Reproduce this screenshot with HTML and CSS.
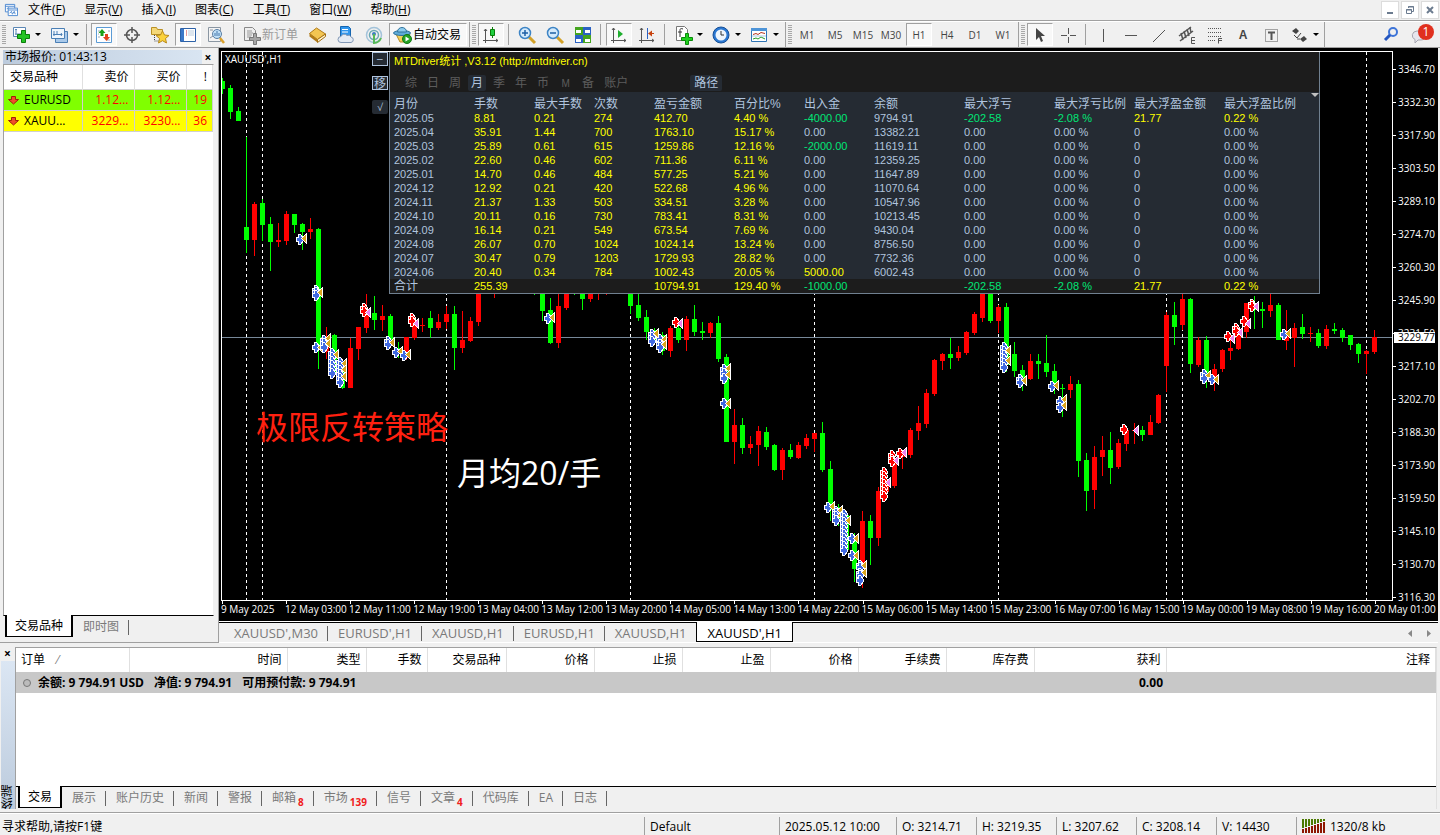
FILE: index.html
```
<!DOCTYPE html>
<html lang="zh-CN">
<head>
    <meta charset="UTF-8">
    <meta name="viewport" content="width=device-width, initial-scale=1.0">
    <title>XAUUSD',H1</title>
    <link rel="stylesheet" href="styles.css">
</head>
<body>
    <nav class="menubar">
        <svg class="app-icon" width="14" height="14" viewBox="0 0 15 15" fill="#fff" stroke="#4a86d0"><path d="M1.500 1.500h10v8h-10z"/><path d="M1.500 3.500h10M3 6l2-1 1 2 2-1" /><path d="M4.500 5.500h10v8h-10z"/><path d="M4.500 7.500h10M6 11l2-2 1 3 2-3 1 3" fill="none"/></svg>
        <button>文件(<u>F</u>)</button>
        <button>显示(<u>V</u>)</button>
        <button>插入(<u>I</u>)</button>
        <button>图表(<u>C</u>)</button>
        <button>工具(<u>T</u>)</button>
        <button>窗口(<u>W</u>)</button>
        <button>帮助(<u>H</u>)</button>
        <div class="window-buttons">
            <button aria-label="Minimize"><svg width="10" height="10" stroke="#6b7b8f" stroke-width="2"><path d="M2 8h6"/></svg></button>
            <button aria-label="Restore"><svg width="10" height="10" fill="none" stroke="#6b7b8f"><path d="M3.500 3V1.500h5v5H7M3 2h6M1.500 4.500h5v4h-5zM1 5h6"/></svg></button>
            <button aria-label="Close"><svg width="10" height="10" stroke="#6b7b8f" stroke-width="2"><path d="M2 2l6 6M8 2L2 8"/></svg></button>
        </div>
    </nav>

    <div class="toolbar">
        <div class="tool-group">
            <span class="grip"></span>
            <button class="tool drop" aria-label="New chart"><svg width="20" height="20" viewBox="0 0 20 20"><path d="M2.500 2.500h12v9h-12z" fill="#fff" stroke="#5b87b5"/><path d="M5 4v6M4 5l1-1 1 1M4 9h8" stroke="#5b87b5" fill="none"/><path d="M10.500 5.500h4v4h4v4h-4v4h-4v-4h-4v-4h4z" fill="#23c423" stroke="#0a7d0a"/></svg></button>
            <button class="tool drop" aria-label="Profiles"><svg width="20" height="20" viewBox="0 0 20 20" stroke="#4a7fb5"><path d="M6.500 6.500h12v11h-12z" fill="#a9c9ea"/><path d="M2.500 3.500h13v10h-13z" fill="#eef5fc"/><path d="M5 6v5M4 9.500h9M8 6v4M12 8l1 1.500-1 1.500" fill="none"/></svg></button>
            <span class="sep"></span>
            <button class="tool pressed" aria-label="Market watch"><svg width="20" height="20" viewBox="0 0 20 20"><path d="M2.500 2.500h15v15h-15z" fill="#fff" stroke="#5b9bd5"/><path d="M4 6h2M4 9h1M4 12h2M14 6h2M13 15h3" stroke="#9ab"/><path d="M8 4l3.500 4h-2v3h-3V8h-2z" fill="#18a018"/><path d="M12.500 16l3.500-4h-2V9h-3v3H9z" fill="#e0431c"/></svg></button>
            <button class="tool" aria-label="Data window"><svg width="20" height="20" viewBox="0 0 20 20" fill="none" stroke="#555" stroke-width="1.500"><circle cx="10" cy="10" r="5.500"/><path d="M10 2v6M10 12v6M2 10h6M12 10h6"/></svg></button>
            <button class="tool" aria-label="Navigator"><svg width="20" height="20" viewBox="0 0 20 20"><path d="M1.500 2.500h5l1 2h5v5h-11z" fill="#f5d878" stroke="#b99025"/><path d="M4.500 10v6h5" fill="none" stroke="#444" stroke-dasharray="1 1"/><path d="M12.500 6l2 4 4.500.5-3.500 3 1 4.500-4-2.300-4 2.300 1-4.500-3.500-3 4.500-.5z" fill="#fbd23c" stroke="#b98a1c"/></svg></button>
            <button class="tool pressed" aria-label="Terminal"><svg width="20" height="20" viewBox="0 0 20 20"><path d="M2.500 3.500h15v13h-15z" fill="#fff" stroke="#2d62a8"/><path d="M3 4h3v12H3z" fill="#3c78c8"/><path d="M8 6h1M8 8h1M8 10h1" stroke="#c33"/><path d="M10 6h6M10 8h6M10 10h6" stroke="#bcd"/></svg></button>
            <button class="tool" aria-label="Strategy tester"><svg width="20" height="20" viewBox="0 0 20 20"><path d="M2.500 2.500h12v14h-12z" fill="#f4f4f4" stroke="#8a96a2"/><path d="M4 5h3M4 13l3-2" stroke="#8a96a2"/><circle cx="11" cy="9" r="4.500" fill="#bfe0f8" stroke="#5a7fa5"/><path d="M9 11V8M11 11V6M13 11V8" stroke="#47a"/><path d="M14 13l4 5" stroke="#d9a02c" stroke-width="2.500"/></svg></button>
            <span class="sep"></span>
            <button class="tool wide" disabled><svg width="20" height="20" viewBox="0 0 20 20"><path d="M2.500 2.500h8l3 3v10h-11z" fill="#eee" stroke="#888"/><path d="M5 6h5M5 8h6M5 10h5M5 12h4" stroke="#999"/><path d="M11.500 8.500h3v4h4v3h-4v4h-3v-4h-4v-3h4z" fill="#a5a5a5" stroke="#777"/></svg><span>新订单</span></button>
            <button class="tool" aria-label="MetaEditor"><svg width="20" height="20" viewBox="0 0 20 20"><path d="M8.500 3l9 6-8 5.500-8-6z" fill="#f3c552" stroke="#b07a18"/><path d="M1.500 8.500v3l8 6v-3z" fill="#b07a18"/><path d="M9.500 14.500l8-5.500v2.500l-8 6z" fill="#fff3cf" stroke="#a56f10"/></svg></button>
            <button class="tool" aria-label="VPS"><svg width="20" height="20" viewBox="0 0 20 20"><path d="M4.500 1.500h8l2 2v8h-10z" fill="#2f96ee" stroke="#1565b0"/><path d="M6 4.500h6M6 7h6" stroke="#fff"/><path d="M5 17.500a3 3 0 0 1 0-6 3.500 3.500 0 0 1 6-1 3 3 0 0 1 4 1.500 2.800 2.800 0 0 1 0 5.500z" fill="#e4ebf4" stroke="#8197b5"/></svg></button>
            <button class="tool" aria-label="Signals"><svg width="20" height="20" viewBox="0 0 20 20" fill="none"><circle cx="10" cy="10" r="7.500" stroke="#a3c3da" stroke-width="1.500"/><circle cx="10" cy="10" r="4.500" stroke="#6ba8b5" stroke-width="1.500"/><circle cx="10" cy="9" r="2" fill="#3f7fc0"/><path d="M10 9v9a8 8 0 0 0 7-5" stroke="#57b957" stroke-width="2"/></svg></button>
            <button class="tool wide pressed"><svg width="20" height="20" viewBox="1 0 20 20"><path d="M4 9h14l-4 8H8z" fill="#f4cf5b" stroke="#b58b20"/><ellipse cx="10" cy="8" rx="8.500" ry="2.500" fill="#5fabd8" stroke="#2f739c"/><path d="M5.500 7c0-6 9-6 9 0z" fill="#8ccbed" stroke="#2f739c"/><circle cx="15" cy="14" r="4.500" fill="#27a327" stroke="#117a11"/><path d="M13.500 11.500l4 2.500-4 2.500z" fill="#fff"/></svg><span>自动交易</span></button>
        </div>
        <div class="tool-group charts">
            <span class="grip"></span>
            <button class="tool pressed" aria-label="Candlesticks"><svg width="20" height="20" viewBox="0 0 20 20"><path d="M4.500 4v14M2 15.500h15M3 6l1.500-2L6 6M15 14l2 1.500-2 1.500" fill="none" stroke="#555"/><path d="M11.500 2v11" stroke="#0a7d0a"/><path d="M9.500 4.500h4v6h-4z" fill="#1fcf3f" stroke="#0a7d0a"/></svg></button>
            <span class="sep"></span>
            <button class="tool" aria-label="Zoom in"><svg width="20" height="20" viewBox="0 0 20 20"><path d="M12 12l6 6" stroke="#d3a127" stroke-width="3"/><circle cx="8" cy="8" r="5.500" fill="#d4eafb" stroke="#3d84c5" stroke-width="1.500"/><path d="M5 8h6M8 5v6" stroke="#1d5fa5" stroke-width="1.500"/></svg></button>
            <button class="tool" aria-label="Zoom out"><svg width="20" height="20" viewBox="0 0 20 20"><path d="M12 12l6 6" stroke="#d3a127" stroke-width="3"/><circle cx="8" cy="8" r="5.500" fill="#d4eafb" stroke="#3d84c5" stroke-width="1.500"/><path d="M5 8h6" stroke="#1d5fa5" stroke-width="1.500"/></svg></button>
            <button class="tool" aria-label="Tile windows"><svg width="20" height="20" viewBox="0 0 20 20"><path d="M2 2h8v8H2zM10 10h8v8h-8z" fill="#45a51f"/><path d="M10 2h8v8h-8zM2 10h8v8H2z" fill="#2b62c4"/><path d="M3 5h5v3H3zM12 5h5v3h-5zM3 14h5v3H3zM12 14h5v3h-5z" fill="#fff"/></svg></button>
            <span class="sep"></span>
            <button class="tool pressed" aria-label="Auto scroll"><svg width="20" height="20" viewBox="0 0 20 20"><path d="M4.500 3v15M2 15.500h15M3 5l1.500-2L6 5M15 14l2 1.500-2 1.500" fill="none" stroke="#555"/><path d="M9 5l5 4-5 4z" fill="#1fae2f"/></svg></button>
            <button class="tool" aria-label="Chart shift"><svg width="20" height="20" viewBox="0 0 20 20"><path d="M4.500 3v15M2 15.500h15M3 5l1.500-2L6 5M15 14l2 1.500-2 1.500" fill="none" stroke="#555"/><path d="M10.500 3v11" stroke="#2b62c4"/><path d="M17 8.500h-4" stroke="#c8430f"/><path d="M11 8.500l4-3v6z" fill="#c8430f"/></svg></button>
            <span class="sep"></span>
            <button class="tool drop" aria-label="Indicators"><svg width="20" height="20" viewBox="0 0 20 20"><path d="M3.500 1.500h8l3 3v11h-11z" fill="#fff" stroke="#777"/><path d="M10 4c-3-1-3 0-3 2v6M5 7h4" fill="none" stroke="#333"/><path d="M12.500 8.500h3v4h4v3h-4v4h-3v-4h-4v-3h4z" fill="#1fd01f" stroke="#0a8a0a"/></svg></button>
            <button class="tool drop" aria-label="Periods"><svg width="20" height="20" viewBox="0 0 20 20"><circle cx="10" cy="10" r="8" fill="#2b78d2" stroke="#174f96"/><circle cx="10" cy="10" r="5.500" fill="#eef5fc"/><path d="M10 6v4h3" fill="none" stroke="#333"/></svg></button>
            <button class="tool drop" aria-label="Templates"><svg width="20" height="20" viewBox="0 0 20 20"><path d="M2.500 3.500h15v13h-15z" fill="#fff" stroke="#2f74b5"/><path d="M2 3h16v3H2z" fill="#4d94d8"/><path d="M4 9.500l3-1 2 1 3-2 4 1" fill="none" stroke="#b8321c"/><path d="M4 14l3-1 2 1 3-2 4 2" fill="none" stroke="#269a26"/><path d="M3 11h14" stroke="#adc7e0"/></svg></button>
        </div>
        <div class="tool-group periods">
            <span class="grip"></span>
            <button class="tool">M1</button>
            <button class="tool">M5</button>
            <button class="tool">M15</button>
            <button class="tool">M30</button>
            <button class="tool pressed">H1</button>
            <button class="tool">H4</button>
            <button class="tool">D1</button>
            <button class="tool">W1</button>
        </div>
        <div class="tool-group">
            <span class="grip"></span>
            <button class="tool pressed" aria-label="Cursor"><svg width="20" height="20" viewBox="0 0 20 20"><path d="M6 3v12l3-3 2 5 2-1-2-5h4z" fill="#444"/></svg></button>
            <button class="tool" aria-label="Crosshair"><svg width="20" height="20" viewBox="0 0 20 20"><path d="M10.500 3v6M10.500 12v6M3 10.500h6M12 10.500h6" stroke="#555"/></svg></button>
            <span class="sep"></span>
            <button class="tool" aria-label="Vertical line"><svg width="20" height="20" viewBox="0 0 20 20"><path d="M10.500 4v13" stroke="#555"/></svg></button>
            <button class="tool" aria-label="Horizontal line"><svg width="20" height="20" viewBox="0 0 20 20"><path d="M4 10.500h12" stroke="#555"/></svg></button>
            <button class="tool" aria-label="Trendline"><svg width="20" height="20" viewBox="0 0 20 20"><path d="M4 17L16 5" stroke="#555"/></svg></button>
            <button class="tool" aria-label="Equidistant channel"><svg width="20" height="20" viewBox="0 0 20 20" fill="none" stroke="#555"><path d="M2 11L14 2M3 16L16 6M4 8l2 7M7 6l2 7M10 4l2 7M13 2l1 6" stroke-width="1.500"/><path d="M18 12.500h-3.500v6H18M14.500 15.500H18"/></svg></button>
            <button class="tool" aria-label="Fibonacci"><svg width="20" height="20" viewBox="0 0 20 20" fill="none" stroke="#555"><path d="M3 3.500h14M3 7.500h14M3 11.500h14M3 15.500h8" stroke-dasharray="1 1"/><path d="M17 13.500h-3.500v5M13.500 15.500H17"/></svg></button>
            <button class="tool letter" aria-label="Text">A</button>
            <button class="tool" aria-label="Text label"><svg width="20" height="20" viewBox="0 0 20 20" fill="none" stroke="#555"><path d="M4.500 4.500h12v12h-12z" stroke-dasharray="1 1"/><path d="M7 7.500h7M10.500 7v8" stroke-width="2"/></svg></button>
            <button class="tool drop" aria-label="Arrows"><svg width="20" height="20" viewBox="0 0 20 20" fill="#444"><path d="M3 6l4-3 3 3-3 3zM11 14l4-3 3 3-4 3z"/><path d="M5 10l3 3 4-5M8 14h3" fill="none" stroke="#444"/></svg></button>
        </div>
        <div class="tool-end">
            <button class="tool" aria-label="Search"><svg width="18" height="18" viewBox="0 0 18 18" fill="none"><circle cx="11" cy="6" r="4" stroke="#3d74d8" stroke-width="2"/><path d="M8 9l-5 5" stroke="#2456c0" stroke-width="3"/></svg></button>
            <button class="tool chat" aria-label="Notifications"><svg width="24" height="18" viewBox="0 0 24 18"><path d="M8 5h4a5 4.500 0 0 1 0 9H9l-3 3v-3.500A5 4.500 0 0 1 8 5z" fill="#e6e6ee" stroke="#a6a6b0"/></svg><span class="badge">1</span></button>
        </div>
    </div>

    <main class="workspace">
        <section class="market">
            <div class="panel-title"><span>市场报价: 01:43:13</span><button aria-label="Close">×</button></div>
            <div class="market-body">
                <table class="quotes">
                    <thead><tr><th>交易品种</th><th>卖价</th><th>买价</th><th>!</th></tr></thead>
                    <tbody>
                        <tr class="lime"><td><svg width="11" height="10" viewBox="0 0 11 10"><path d="M3.500 1.500h4v3h3l-5 4.500-5-4.500h3z" fill="#f0502a" stroke="#a02008"/></svg>EURUSD</td><td>1.12...</td><td>1.12...</td><td>19</td></tr>
                        <tr class="yellow"><td><svg width="11" height="10" viewBox="0 0 11 10"><path d="M3.500 1.500h4v3h3l-5 4.500-5-4.500h3z" fill="#f0502a" stroke="#a02008"/></svg>XAUU...</td><td>3229...</td><td>3230...</td><td>36</td></tr>
                    </tbody>
                </table>
            </div>
            <div class="tabs">
                <button class="tab active">交易品种</button>
                <button class="tab">即时图</button>
            </div>
        </section>

        <section class="chart-area">
            <div class="chart">
                <div class="plot">
                    <svg id="plot-svg" viewBox="222 52 1170 548" preserveAspectRatio="none" shape-rendering="crispEdges"></svg>
                    <span class="symbol">XAUUSD',H1</span>
                    <span class="note note-red">极限反转策略</span>
                    <span class="note note-white">月均20/手</span>
                    <div class="stats-side">
                        <button>−</button>
                        <button>移</button>
                        <button class="flat">√</button>
                    </div>
                    <div class="stats">
                        <div class="stats-head">
                            <div class="stats-title">MTDriver统计 ,V3.12 (http://mtdriver.cn)</div>
                            <div class="stats-tabs">
                                <button>综</button><button>日</button><button>周</button><button class="on">月</button><button>季</button><button>年</button><button>币</button><button class="small">M</button><button>备</button><button>账户</button><button class="on path">路径</button>
                            </div>
                        </div>
                        <table class="stats-table">
                            <thead>
                                <tr><th>月份</th><th>手数</th><th>最大手数</th><th>次数</th><th>盈亏金额</th><th>百分比%</th><th>出入金</th><th>余额</th><th>最大浮亏</th><th>最大浮亏比例</th><th>最大浮盈金额</th><th>最大浮盈比例</th></tr>
                            </thead>
                            <tbody id="stats-rows"></tbody>
                            <tfoot>
                                <tr><td>合计</td><td class="y">255.39</td><td></td><td></td><td class="y">10794.91</td><td class="y">129.40 %</td><td class="g">-1000.00</td><td></td><td class="g">-202.58</td><td class="g">-2.08 %</td><td class="y">21.77</td><td class="y">0.22 %</td></tr>
                            </tfoot>
                        </table>
                        <span class="stats-caret"></span>
                    </div>
                </div>
                <div class="prices" id="prices"></div>
                <div class="times" id="times"></div>
            </div>
            <div class="chart-tabs">
                <button class="tab">XAUUSD',M30</button>
                <button class="tab">EURUSD',H1</button>
                <button class="tab">XAUUSD,H1</button>
                <button class="tab">EURUSD,H1</button>
                <button class="tab last">XAUUSD,H1</button>
                <button class="tab active">XAUUSD',H1</button>
                <span class="scrollers"><button aria-label="Previous"><svg width="4" height="7"><path d="M4 0v7L0 3.500z" fill="#888"/></svg></button><button aria-label="Next"><svg width="4" height="7"><path d="M0 0v7l4-3.500z" fill="#888"/></svg></button></span>
            </div>
        </section>
    </main>

    <section class="terminal">
        <div class="terminal-side">
            <button aria-label="Close">×</button>
            <div class="terminal-name">终端</div>
        </div>
        <div class="terminal-body">
            <table class="orders">
                <colgroup><col class="w-order"><col class="w-time"><col class="w-type"><col class="w-lots"><col class="w-type"><col class="w-price"><col class="w-price"><col class="w-price"><col class="w-price"><col class="w-price"><col class="w-price"><col class="w-profit"><col></colgroup>
                <thead><tr><th>订单<i>⁄</i></th><th>时间</th><th>类型</th><th>手数</th><th>交易品种</th><th>价格</th><th>止损</th><th>止盈</th><th>价格</th><th>手续费</th><th>库存费</th><th>获利</th><th>注释</th></tr></thead>
                <tbody><tr><td colspan="11"><span class="dot"></span><span class="sum">余额: 9 794.91 USD</span><span class="sum">净值: 9 794.91</span><span class="sum">可用预付款: 9 794.91</span></td><td>0.00</td><td></td></tr></tbody>
            </table>
            <div class="tabs terminal-tabs">
                <button class="tab active">交易</button>
                <button class="tab">展示</button>
                <button class="tab">账户历史</button>
                <button class="tab">新闻</button>
                <button class="tab">警报</button>
                <button class="tab">邮箱<b>8</b></button>
                <button class="tab">市场<b>139</b></button>
                <button class="tab">信号</button>
                <button class="tab">文章<b>4</b></button>
                <button class="tab">代码库</button>
                <button class="tab">EA</button>
                <button class="tab">日志</button>
            </div>
        </div>
    </section>

    <footer class="statusbar">
        <span class="help">寻求帮助,请按F1键</span>
        <span class="s-profile">Default</span>
        <span class="s-date">2025.05.12 10:00</span>
        <span class="s-value">O: 3214.71</span>
        <span class="s-value">H: 3219.35</span>
        <span class="s-value">L: 3207.62</span>
        <span class="s-value">C: 3208.14</span>
        <span class="s-value">V: 14430</span>
        <span class="s-net"><svg width="24" height="14" viewBox="0 0 24 14" shape-rendering="crispEdges"><path d="M1 0v9M4 0v8M7 0v7M10 0v6M13 0v5M16 0v4M19 0v3M22 0v2" stroke="#4c7a00" stroke-width="2"/><path d="M1 10v4M4 9v5M7 8v6M10 7v7M13 6v8M16 5v9M19 4v10M22 3v11" stroke="#8e1600" stroke-width="2"/></svg>1320/8 kb</span>
    </footer>

    <script src="chart.js"></script>
</body>
</html>
```
FILE: styles.css
```
* {
    box-sizing: border-box;
}

body {
    margin: 0;
    height: 100vh;
    display: flex;
    flex-direction: column;
    overflow: hidden;
    background: #f0f0f0;
    color: #000;
    font: 12px/16px "Open Sans", "Noto Sans CJK SC", sans-serif;
}

button {
    margin: 0;
    padding: 0;
    border: 0;
    background: none;
    color: inherit;
    font: inherit;
}

table {
    border-collapse: collapse;
    table-layout: fixed;
    width: 100%;
}

th {
    font-weight: normal;
}

/* Menu */
.menubar {
    display: flex;
    align-items: center;
    height: 21px;
    flex: none;
    padding-left: 4px;
    border-bottom: 1px solid #a0a0a0;
}

.menubar > button {
    padding: 0 9px 0 10px;
}

.window-buttons {
    display: flex;
    gap: 2px;
    margin-left: auto;
    padding-right: 1px;
}

.window-buttons button {
    display: flex;
    align-items: center;
    justify-content: center;
    width: 18px;
    height: 18px;
    background: #fff;
    border: 1px solid #dcdcdc;
}

/* Toolbar */
.toolbar {
    display: flex;
    flex: none;
    height: 27px;
    border-top: 1px solid #fff;
    border-bottom: 1px solid #a0a0a0;
}

.tool-group {
    display: flex;
    align-items: center;
    gap: 2px;
    padding: 0 2px;
    border-right: 1px solid #a0a0a0;
}

.grip {
    width: 4px;
    height: 20px;
    background: repeating-linear-gradient(#a8a8a8 0 1px, #f0f0f0 1px 2px);
}

.sep {
    width: 1px;
    height: 21px;
    margin: 0 2px;
    background: #a0a0a0;
}

.charts {
    padding-right: 3px;
}

.charts .sep {
    margin-right: 3px;
}

.tool {
    display: flex;
    align-items: center;
    justify-content: center;
    width: 26px;
    height: 23px;
    color: #444;
}

.tool.drop {
    width: 36px;
    justify-content: flex-start;
    padding-left: 3px;
}

.tool.drop::after {
    content: "";
    margin-left: 4px;
    border: 3px solid transparent;
    border-top-color: #000;
    border-bottom: 0;
}

.tool.wide {
    width: auto;
    padding: 0 5px 0 3px;
    color: #000;
}

.tool.wide:disabled {
    color: #9a9a9a;
    padding: 0 5px 0 4px;
}

.tool.pressed {
    background: #f8f8f8;
    border: 1px solid #fff;
    border-top-color: #a0a0a0;
    border-left-color: #a0a0a0;
}

.periods .tool {
    font-size: 10px;
}

.letter {
    font: bold 12px "Liberation Sans", sans-serif;
}

.tool-end {
    display: flex;
    align-items: center;
    gap: 4px;
    margin-left: auto;
    padding-right: 6px;
}

.chat {
    position: relative;
}

.badge {
    position: absolute;
    right: 0;
    top: 1px;
    width: 16px;
    height: 16px;
    border-radius: 8px;
    background: #e0301e;
    color: #fff;
}

/* Workspace */
.workspace {
    display: flex;
    flex: 1;
    min-height: 0;
}

.market {
    display: flex;
    flex-direction: column;
    width: 219px;
    padding: 2px 4px 4px 3px;
    border-right: 1px solid #a0a0a0;
    border-bottom: 1px solid #a0a0a0;
}

.panel-title {
    display: flex;
    height: 14px;
    line-height: 13px;
}

.panel-title span {
    flex: 1;
    padding-left: 2px;
    background: linear-gradient(90deg, #bccbdd, #d9e5f2);
}

.panel-title button {
    width: 12px;
    font-weight: bold;
}

.market-body {
    flex: 1;
    background: #fff;
    border: 1px solid #a0a0a0;
    border-bottom-color: #000;
    border-right-color: #f0f0f0;
}

.quotes th {
    height: 24px;
    border-right: 1px solid #e0e0e0;
}

.quotes th,
.quotes td {
    width: 52px;
    padding: 0 5px 0 0;
    text-align: right;
}

.quotes th:first-child {
    width: 78px;
    padding-left: 6px;
    text-align: left;
}

.quotes th:last-child {
    width: auto;
}

.quotes td {
    height: 21px;
    border: 1px solid #d0d0d0;
    border-left: 0;
    color: #f00;
}

.quotes td:first-child {
    padding-left: 4px;
    text-align: left;
    color: #000;
}

.quotes td svg {
    margin-right: 5px;
    vertical-align: -1px;
}

.lime {
    background: #80ff00;
}

.yellow {
    background: #ff0;
}

.tabs {
    display: flex;
    align-items: flex-start;
    padding-left: 2px;
}

.tab {
    position: relative;
    height: 22px;
    padding: 0 10px;
    color: #7a7a7a;
}

.tab::after {
    content: "";
    position: absolute;
    right: 0;
    top: 4px;
    width: 1px;
    height: 15px;
    background: #666;
}

.tab.active {
    height: 22px;
    margin-top: -1px;
    padding: 1px 8px 0;
    background: #fff;
    border: 1px solid #000;
    border-width: 0 2px 1px 2px;
    color: #000;
}

.tab.active::after,
.tab.last::after {
    display: none;
}

/* Chart */
.chart-area {
    display: flex;
    flex-direction: column;
    flex: 1;
    min-width: 0;
    padding-right: 2px;
}

.chart {
    display: grid;
    grid-template: 1fr 20px / 1fr 45px;
    flex: 1;
    min-height: 0;
    padding: 3px 0 0 2px;
    background: #000;
    color: #fff;
    font-size: 10px;
}

.plot {
    position: relative;
    border: 1px solid #fff;
}

#plot-svg {
    position: absolute;
    width: 100%;
    height: 100%;
}

.symbol {
    position: absolute;
    left: 3px;
    top: 0;
    line-height: 14px;
}

.note {
    position: absolute;
    font-size: 32px;
    line-height: 40px;
}

.note-red {
    left: 34px;
    top: 355px;
    color: #ff2010;
}

.note-white {
    left: 235px;
    top: 401px;
}

.prices {
    display: flex;
    flex-direction: column;
    justify-content: space-between;
    position: relative;
    margin-bottom: -1px;
    padding-top: 13px;
}

.prices span {
    padding-left: 5px;
    line-height: 10px;
    background: linear-gradient(#fff, #fff) 0 5px / 3px 1px no-repeat;
}

.prices .current {
    position: absolute;
    left: 1px;
    top: 281px;
    width: 41px;
    padding-left: 4px;
    line-height: 11px;
    background: #fff;
    color: #000;
}

.times {
    display: grid;
    grid-template-columns: repeat(19, 1fr);
    grid-column: span 2;
    line-height: 17px;
    white-space: nowrap;
}

.times span {
    background: linear-gradient(#fff, #fff) 1px 0 / 1px 3px no-repeat;
}

.chart-tabs {
    display: flex;
    height: 22px;
    border-top: 1px solid #fff;
    border-bottom: 1px solid #fff;
    padding-left: 5px;
    box-shadow: inset 0 1px #000;
    font-size: 13px;
}

.chart-tabs .tab {
    height: 20px;
    padding: 2px 10px 0;
}

.chart-tabs .tab.active {
    border-width: 0 1px 1px 1px;
    margin-top: 0;
}

.scrollers {
    display: flex;
    gap: 15px;
    margin-left: auto;
    padding-right: 7px;
}

/* Statistics overlay */
.stats-side {
    position: absolute;
    left: 150px;
    top: 0;
    display: flex;
    flex-direction: column;
    gap: 10px;
}

.stats-side button {
    width: 16px;
    height: 14px;
    border: 1px solid #b0c4de;
    background: #252b33;
    color: #b0c4de;
    font-size: 12px;
    line-height: 11px;
}

.stats-side .flat {
    border: 0;
    border-radius: 2px;
    font-size: 10px;
}

.stats {
    position: absolute;
    left: 167px;
    top: 0;
    width: 931px;
    border: 1px solid #708090;
    border-top: 0;
    background: #252b33;
    color: #b0c4de;
    font: 11px/14px "Liberation Sans", "Noto Sans CJK SC", sans-serif;
}

.stats-head {
    height: 40px;
    padding: 2px 4px;
    background: #1c1c1c;
}

.stats-title {
    color: #ff0;
}

.stats-tabs {
    display: flex;
    gap: 4px;
    margin-top: 7px;
    padding-left: 8px;
    font-size: 12px;
    color: #5c5c5c;
}

.stats-tabs button {
    height: 16px;
    padding: 0 3px;
    line-height: 17px;
}

.stats-tabs .small {
    width: 19px;
    font-size: 10px;
}

.stats-tabs .on {
    border-radius: 2px;
    background: #252b33;
    color: #b0c4de;
}

.stats-tabs .path {
    margin-left: 55px;
    padding: 0 4px;
}

.stats-table th,
.stats-table td {
    width: 90px;
    height: 14px;
    padding: 0 0 0 4px;
    text-align: left;
    white-space: nowrap;
}

.stats-table th {
    height: 19px;
    padding-top: 6px;
    font-size: 12px;
    line-height: 13px;
}

.stats-table th:nth-child(1),
.stats-table th:nth-child(5),
.stats-table th:nth-child(10) {
    width: 80px;
}

.stats-table th:nth-child(2),
.stats-table th:nth-child(3),
.stats-table th:nth-child(4) {
    width: 60px;
}

.stats-table th:nth-child(6),
.stats-table th:nth-child(7) {
    width: 70px;
}

.stats-table th:last-child {
    width: auto;
}

.stats-table tfoot {
    background: #1c1c1c;
}

.stats-table tfoot td {
    padding-top: 1px;
    line-height: 13px;
}

.stats-table tfoot td:first-child {
    font-size: 12px;
}

.y {
    color: #ff0;
}

.g {
    color: #00e676;
}

.stats-caret {
    position: absolute;
    right: 0;
    top: 41px;
    border: 4px solid transparent;
    border-top-color: #c0c0c0;
    border-bottom: 0;
}

/* Terminal */
.terminal {
    display: flex;
    flex: none;
    height: 170px;
    padding: 4px 3px 3px 0;
    border-bottom: 1px solid #a0a0a0;
}

.terminal-side {
    display: flex;
    flex-direction: column;
    width: 15px;
}

.terminal-side button {
    height: 14px;
    line-height: 10px;
    font-weight: bold;
}

.terminal-name {
    flex: 1;
    margin-left: 1px;
    background: linear-gradient(#bccbdd, #dbe6f3);
    line-height: 13px;
    writing-mode: vertical-rl;
    transform: rotate(180deg);
}

.terminal-body {
    display: flex;
    flex-direction: column;
    justify-content: space-between;
    flex: 1;
    border: 1px solid #a0a0a0;
    border-right-color: #e0e0e0;
    border-bottom: 0;
    background: #fff;
}

.orders th {
    height: 24px;
    padding: 0 5px;
    border-right: 1px solid #e0e0e0;
    text-align: right;
}

.orders th:first-child {
    text-align: left;
}

.orders i {
    margin-left: 12px;
    font-style: normal;
    color: #777;
}

.orders tbody {
    background: #c8c8c8;
    font-weight: bold;
}

.orders td {
    height: 21px;
    padding: 0 3px 0 7px;
    text-align: right;
}

.orders td:first-child {
    text-align: left;
}

.sum {
    margin-right: 10px;
}

.dot {
    display: inline-block;
    width: 8px;
    height: 8px;
    margin-right: 7px;
    border: 1px solid #777;
    border-radius: 4px;
    background: #bbb;
}

.w-order {
    width: 113px;
}

.w-time {
    width: 158px;
}

.w-type {
    width: 79px;
}

.w-lots {
    width: 61px;
}

.w-price {
    width: 88px;
}

.w-profit {
    width: 132px;
}

.terminal-tabs {
    padding: 0 0 0 2px;
    border-top: 1px solid #000;
    background: #f0f0f0;
}

.tab b {
    position: relative;
    top: 4px;
    margin-left: 2px;
    color: #f02020;
    font-size: 10px;
}

/* Status bar */
.statusbar {
    display: flex;
    flex: none;
    height: 22px;
    padding-top: 3px;
    border-top: 1px solid #fff;
}

.statusbar span {
    padding-left: 5px;
    border-left: 1px solid #a0a0a0;
    line-height: 19px;
    white-space: nowrap;
}

.statusbar .help {
    flex: 1;
    padding-left: 2px;
    border: 0;
}

.s-profile {
    width: 135px;
}

.s-date {
    width: 117px;
}

.s-value {
    width: 80px;
}

.s-net {
    width: 144px;
}

.s-net svg {
    margin-right: 4px;
    vertical-align: -2px;
}
```
FILE: chart.js
```
// Monthly statistics
const months = [
    ['2025.05', '8.81', '0.21', '274', '412.70', '4.40', '-4000.00', '9794.91', '-202.58', '-2.08', '21.77', '0.22'],
    ['2025.04', '35.91', '1.44', '700', '1763.10', '15.17', '0.00', '13382.21'],
    ['2025.03', '25.89', '0.61', '615', '1259.86', '12.16', '-2000.00', '11619.11'],
    ['2025.02', '22.60', '0.46', '602', '711.36', '6.11', '0.00', '12359.25'],
    ['2025.01', '14.70', '0.46', '484', '577.25', '5.21', '0.00', '11647.89'],
    ['2024.12', '12.92', '0.21', '420', '522.68', '4.96', '0.00', '11070.64'],
    ['2024.11', '21.37', '1.33', '503', '334.51', '3.28', '0.00', '10547.96'],
    ['2024.10', '20.11', '0.16', '730', '783.41', '8.31', '0.00', '10213.45'],
    ['2024.09', '16.14', '0.21', '549', '673.54', '7.69', '0.00', '9430.04'],
    ['2024.08', '26.07', '0.70', '1024', '1024.14', '13.24', '0.00', '8756.50'],
    ['2024.07', '30.47', '0.79', '1203', '1729.93', '28.82', '0.00', '7732.36'],
    ['2024.06', '20.40', '0.34', '784', '1002.43', '20.05', '5000.00', '6002.43']
];

document.getElementById('stats-rows').innerHTML = months.map(row => {
    const full = row.length > 8 ? row : row.concat(['0.00', '0.00', '0', '0.00']);
    return '<tr>' + full.map((value, i) => {
        let cls = '';
        if (value.startsWith('-')) cls = 'g';
        else if (i >= 1 && i <= 5) cls = 'y';
        else if (i !== 0 && i !== 7 && parseFloat(value) > 0) cls = 'y';
        const unit = i === 5 || i === 9 || i === 11 ? ' %' : '';
        return `<td class="${cls}">${value}${unit}</td>`;
    }).join('') + '</tr>';
}).join('');

// Axes
let prices = '';
for (let i = 0; i < 17; i++) {
    prices += `<span>${(3346.7 - i * 14.4).toFixed(2)}</span>`;
}
document.getElementById('prices').innerHTML = prices + '<span class="current">3229.77</span>';

const times = ['9 May 2025', '12 May 03:00', '12 May 11:00', '12 May 19:00', '13 May 04:00', '13 May 12:00',
    '13 May 20:00', '14 May 05:00', '14 May 13:00', '14 May 22:00', '15 May 06:00', '15 May 14:00',
    '15 May 23:00', '16 May 07:00', '16 May 15:00', '19 May 00:00', '19 May 08:00', '19 May 16:00', '20 May 01:00'];
document.getElementById('times').innerHTML = times.map(t => `<span>${t}</span>`).join('');

// Candles: bar index, direction, high, low, body top, body bottom
const candles = [
    [0, 'G', 78, 94, 81, 89], [1, 'G', 85, 119, 88, 112], [2, 'G', 107, 121, 111, 121], [3, 'G', 137, 253, 227, 240],
    [4, 'R', 202, 256, 204, 240], [5, 'G', 199, 241, 203, 225], [6, 'G', 217, 271, 224, 242], [7, 'R', 223, 247, 240, 242],
    [8, 'R', 211, 245, 214, 241], [9, 'G', 214, 233, 214, 225], [10, 'G', 223, 250, 224, 232], [11, 'R', 218, 239, 229, 232],
    [12, 'G', 228, 369, 229, 350], [13, 'R', 327, 359, 338, 352], [14, 'G', 334, 375, 335, 373], [15, 'G', 360, 389, 364, 388],
    [16, 'R', 338, 388, 348, 388], [17, 'R', 327, 360, 327, 349], [18, 'R', 294, 333, 313, 328], [19, 'G', 296, 330, 313, 320],
    [20, 'R', 305, 331, 316, 320], [21, 'G', 314, 347, 316, 345], [22, 'G', 342, 358, 348, 354], [23, 'R', 337, 360, 337, 358],
    [24, 'R', 315, 340, 323, 338], [25, 'R', 318, 332, 325, 326], [26, 'G', 311, 338, 318, 328], [27, 'R', 314, 330, 322, 328],
    [28, 'R', 306, 329, 314, 322], [29, 'G', 306, 370, 314, 348], [30, 'R', 311, 353, 340, 348], [31, 'R', 317, 342, 321, 341],
    [32, 'R', 280, 326, 285, 322], [34, 'R', 280, 298, 280, 290], [39, 'G', 280, 295, 280, 290], [40, 'G', 280, 321, 285, 311],
    [41, 'G', 298, 344, 310, 343], [42, 'R', 285, 348, 306, 343], [43, 'R', 280, 310, 285, 308], [44, 'G', 280, 295, 280, 290],
    [45, 'G', 280, 310, 285, 299], [46, 'R', 280, 302, 285, 299], [47, 'R', 280, 300, 280, 290], [48, 'R', 280, 295, 280, 290],
    [51, 'G', 280, 314, 285, 306], [52, 'G', 290, 321, 305, 318], [53, 'G', 310, 340, 317, 332], [54, 'G', 328, 345, 330, 343],
    [55, 'G', 332, 355, 335, 351], [56, 'R', 326, 357, 328, 351], [57, 'G', 325, 343, 328, 340], [58, 'R', 316, 351, 319, 340],
    [59, 'G', 305, 336, 319, 332], [60, 'G', 322, 340, 331, 333], [61, 'R', 322, 338, 323, 333], [62, 'G', 316, 362, 323, 359],
    [63, 'G', 354, 442, 357, 442], [64, 'R', 409, 464, 425, 442], [65, 'G', 418, 454, 425, 448], [66, 'R', 436, 454, 444, 448],
    [67, 'R', 426, 466, 431, 445], [68, 'G', 427, 450, 432, 447], [69, 'G', 444, 471, 445, 470], [70, 'R', 448, 480, 450, 470],
    [71, 'G', 444, 459, 450, 457], [72, 'R', 442, 459, 445, 458], [73, 'R', 434, 449, 438, 446], [74, 'R', 433, 452, 433, 439],
    [75, 'G', 422, 472, 433, 470], [76, 'G', 461, 521, 469, 510], [77, 'G', 504, 526, 507, 522], [78, 'G', 513, 553, 515, 550],
    [79, 'G', 533, 582, 540, 569], [80, 'R', 511, 588, 521, 563], [81, 'G', 515, 565, 521, 538], [82, 'R', 487, 546, 491, 538],
    [83, 'R', 470, 494, 480, 492], [84, 'R', 455, 488, 463, 486], [85, 'R', 450, 469, 453, 457], [86, 'R', 428, 458, 430, 455],
    [87, 'R', 406, 440, 423, 431], [88, 'R', 389, 428, 393, 424], [89, 'R', 359, 396, 360, 394], [90, 'R', 353, 370, 354, 361],
    [91, 'G', 338, 369, 354, 358], [92, 'R', 346, 361, 352, 358], [93, 'R', 331, 355, 332, 353], [94, 'R', 312, 335, 314, 333],
    [95, 'R', 285, 322, 290, 318], [96, 'G', 285, 323, 290, 321], [97, 'R', 305, 333, 307, 321], [98, 'G', 303, 372, 307, 365],
    [99, 'G', 342, 377, 354, 371], [100, 'G', 365, 391, 370, 383], [101, 'R', 354, 380, 361, 379], [102, 'G', 354, 379, 361, 364],
    [103, 'G', 335, 377, 363, 372], [104, 'G', 364, 394, 371, 384], [105, 'G', 384, 417, 388, 389], [106, 'R', 376, 398, 384, 390],
    [107, 'G', 380, 477, 384, 461], [108, 'G', 453, 511, 460, 491], [109, 'R', 446, 509, 457, 490], [110, 'R', 436, 476, 450, 457],
    [111, 'G', 432, 484, 450, 468], [112, 'R', 439, 469, 443, 467], [113, 'R', 428, 451, 430, 444], [114, 'R', 423, 444, 430, 431],
    [115, 'G', 426, 441, 430, 435], [116, 'R', 415, 435, 422, 435], [117, 'R', 394, 424, 395, 423], [118, 'R', 312, 392, 315, 366],
    [119, 'G', 302, 345, 315, 327], [120, 'R', 290, 330, 299, 325], [121, 'G', 298, 373, 299, 364], [122, 'R', 337, 367, 340, 365],
    [123, 'G', 336, 388, 340, 375], [124, 'R', 364, 391, 369, 378], [125, 'R', 349, 372, 350, 369], [126, 'R', 335, 360, 348, 351],
    [127, 'R', 327, 350, 335, 349], [128, 'R', 303, 338, 303, 332], [129, 'G', 296, 329, 303, 310], [130, 'G', 302, 328, 309, 311],
    [131, 'R', 290, 317, 305, 311], [132, 'G', 303, 340, 305, 340], [133, 'R', 310, 350, 335, 341], [134, 'R', 323, 367, 328, 338],
    [135, 'G', 314, 339, 327, 334], [136, 'R', 327, 342, 333, 334], [137, 'G', 329, 348, 333, 346], [138, 'R', 325, 349, 329, 346],
    [139, 'G', 323, 334, 329, 331], [140, 'G', 328, 342, 330, 338], [141, 'G', 335, 350, 335, 345], [142, 'G', 343, 363, 344, 354],
    [143, 'R', 350, 374, 351, 354], [144, 'R', 330, 354, 337, 352]
];

// Trades: bar index, side, entry levels, exit levels
const trades = [
    [10, 'buy', [239], [238]], [12, 'buy', [290, 292, 295], [292]], [12, 'buy', [347], [347]],
    [13, 'buy', [340, 343, 347], [338, 343]], [14, 'buy', run(353, 375), [354]], [15, 'buy', run(362, 384), [363, 369, 376]],
    [18, 'sell', [308, 311], [312]], [21, 'buy', [341, 344], [342]], [22, 'buy', [352], [351]], [23, 'buy', [355], [354]],
    [24, 'sell', [318, 321], [323]], [41, 'buy', [318], [317]], [54, 'buy', [334, 337, 341], [333]],
    [55, 'buy', [339, 344, 347], [339, 344]], [57, 'sell', [322], [323]], [63, 'buy', [369, 373, 378], [368, 374]],
    [63, 'buy', [403], [403]], [76, 'buy', [507], [506]], [77, 'buy', [511, 513, 516, 520], [510, 515]],
    [78, 'buy', run(514, 550), [520]], [79, 'buy', [538], [538]], [79, 'buy', [555], [555]],
    [80, 'buy', [565, 567, 573, 575, 580], [565, 572]], [83, 'sell', run(472, 496), [482]], [84, 'sell', [455, 459, 461], [460]],
    [85, 'sell', [453], [452]], [98, 'buy', run(347, 368), [350, 360]], [100, 'buy', [379, 382], [380]],
    [104, 'buy', [386], [385]], [105, 'buy', [401, 407], [399, 405]], [113, 'sell', [429], []], [114, 'sell', [], [430]],
    [123, 'buy', [374, 378], [375]], [124, 'buy', [379], [379]], [126, 'sell', [336], [338]],
    [127, 'sell', [328, 331], [332]], [128, 'sell', [321], [323]], [129, 'sell', [304, 306], [306]], [133, 'buy', [334], [333]]
];

function run(from, to) {
    const levels = [];
    for (let y = from; y <= to; y += 4) levels.push(y);
    return levels;
}

function barX(i) {
    return 222 + i * 8;
}

let svg = '';
[246, 262, 446, 630, 814, 998, 1166, 1182, 1366].forEach(x => {
    svg += `<path d="M${x + 0.5} 52V600" stroke="#fff" stroke-dasharray="3 3"/>`;
});
svg += '<path d="M222 337.5H1392" stroke="#778899"/>';

candles.forEach(([i, dir, high, low, top, bottom]) => {
    const x = barX(i);
    const color = dir === 'G' ? '#00ff00' : '#ff0000';
    svg += `<path d="M${x} ${high}h1V${low}h-1zM${x - 2} ${top}h5V${bottom}h-5z" fill="${color}"/>`;
});

trades.forEach(([i, side, entries, exits]) => {
    const x = barX(i);
    const entryColor = side === 'buy' ? '#4169e1' : '#ff0000';
    const exitColor = side === 'buy' ? '#daa520' : '#ee82ee';
    entries.forEach(y => {
        svg += `<path d="M${x - 5.5} ${y - 1.5}h2v-3h2l3 4v2l-3 4h-2v-3h-2z" fill="${entryColor}" stroke="#fff"/>`;
    });
    exits.forEach(y => {
        svg += `<path d="M${x - 0.5} ${y + 0.5}l5 -5v10z" fill="${exitColor}" stroke="#fff"/>`;
    });
});

document.getElementById('plot-svg').innerHTML = svg;
```
